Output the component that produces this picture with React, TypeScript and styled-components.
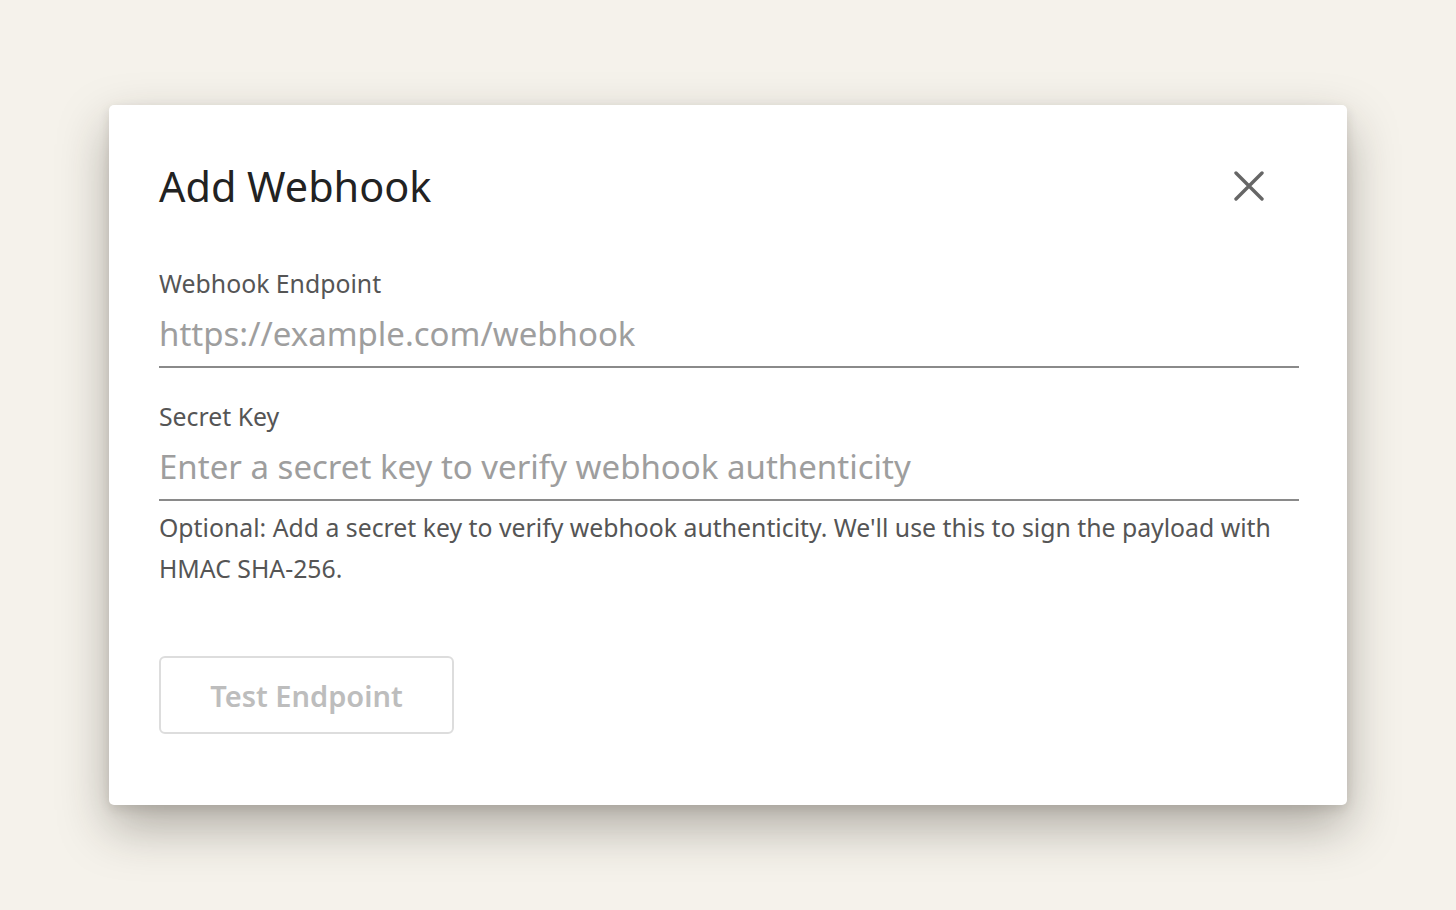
import React from "react";
import styled, { createGlobalStyle } from "styled-components";

const Global = createGlobalStyle`
  html, body { margin: 0; padding: 0; }
  body {
    background: #f5f2eb;
    font-family: "Noto Sans", "Open Sans", sans-serif;
  }
  * { box-sizing: border-box; }
`;

const Page = styled.div`
  min-height: 100vh;
  display: flex;
  align-items: center;
  justify-content: center;
`;

const Card = styled.div`
  width: 1238px;
  background: #ffffff;
  border-radius: 5px;
  padding: 56px 48px 71px 50px;
  box-shadow: 0 22px 50px rgba(40, 35, 25, 0.34), 0 4px 12px rgba(40, 35, 25, 0.12);
  display: flex;
  flex-direction: column;
`;

const Header = styled.div`
  display: flex;
  align-items: center;
  justify-content: space-between;
`;

const Title = styled.h2`
  margin: 0;
  font-size: 41.4px;
  line-height: 50px;
  font-weight: 400;
  color: #222222;
`;

const CloseButton = styled.button`
  width: 48px;
  height: 48px;
  margin-right: 26px;
  border: none;
  background: transparent;
  padding: 0;
  display: flex;
  align-items: center;
  justify-content: center;
  cursor: pointer;
  color: #666666;
`;

const Field = styled.div<{ $top: number }>`
  display: flex;
  flex-direction: column;
  margin-top: ${(p) => p.$top}px;
`;

const Label = styled.label`
  font-size: 24.8px;
  line-height: 34px;
  color: #555555;
`;

const Input = styled.input`
  margin-top: 6px;
  border: none;
  border-bottom: 2px solid #8a8a8a;
  padding: 8px 0 12px 0;
  font-family: inherit;
  font-size: 33px;
  line-height: 40px;
  color: #333333;
  outline: none;
  background: transparent;
  &::placeholder {
    color: #9e9e9e;
  }
`;

const Help = styled.p`
  margin: 6px 0 0 0;
  font-size: 24.8px;
  line-height: 41px;
  color: #555555;
`;

const Actions = styled.div`
  margin-top: 67px;
  display: flex;
`;

const TestButton = styled.button`
  width: 295px;
  height: 78px;
  border: 2px solid #dddddd;
  border-radius: 6px;
  background: #ffffff;
  font-family: inherit;
  font-size: 29px;
  font-weight: 600;
  color: #bdbdbd;
  cursor: not-allowed;
`;

export default function App() {
  return (
    <>
      <Global />
      <Page>
        <Card>
          <Header>
            <Title>Add Webhook</Title>
            <CloseButton aria-label="Close">
              <svg width="30" height="30" viewBox="0 0 30 30" fill="none">
                <path d="M2 2 L28 28 M28 2 L2 28" stroke="currentColor" strokeWidth="3.4" strokeLinecap="round" />
              </svg>
            </CloseButton>
          </Header>
          <Field $top={55}>
            <Label>Webhook Endpoint</Label>
            <Input placeholder="https://example.com/webhook" />
          </Field>
          <Field $top={31}>
            <Label>Secret Key</Label>
            <Input placeholder="Enter a secret key to verify webhook authenticity" />
          </Field>
          <Help>
            Optional: Add a secret key to verify webhook authenticity. We'll use this to sign the payload with HMAC SHA-256.
          </Help>
          <Actions>
            <TestButton disabled>Test Endpoint</TestButton>
          </Actions>
        </Card>
      </Page>
    </>
  );
}
